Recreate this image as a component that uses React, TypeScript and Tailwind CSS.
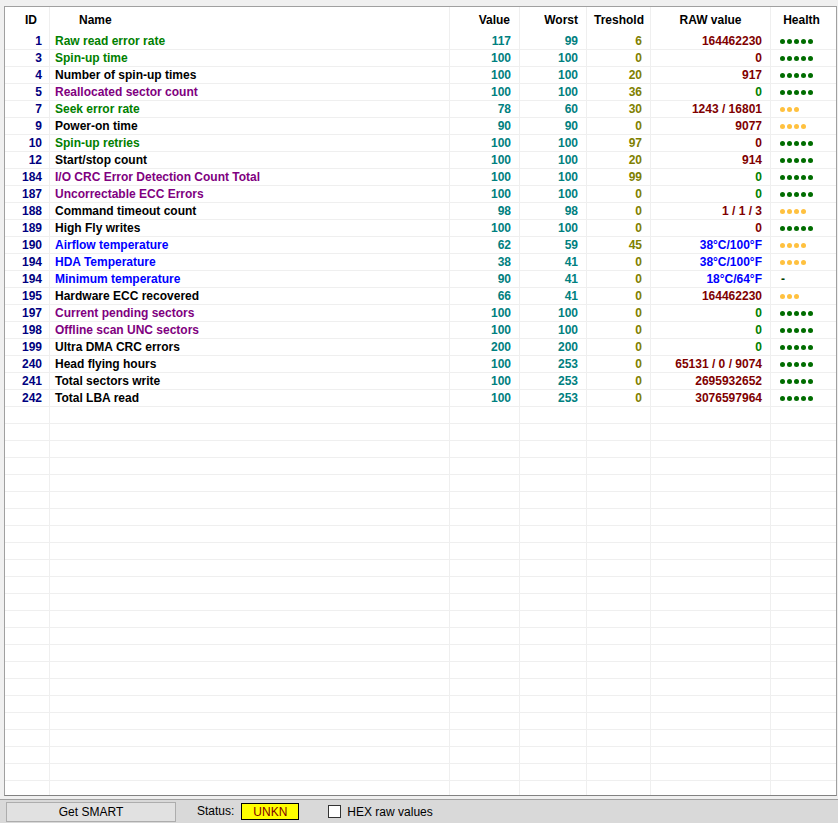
import React from 'react';

type Row = {
  id: number;
  name: string;
  nc: string;
  value: number;
  worst: number;
  thr: number;
  raw: string;
  rc: string;
  dots: number;
  dc: string;
};

const G = 'text-[#008000]';
const K = 'text-black';
const P = 'text-[#800080]';
const B = 'text-[#0000ff]';
const M = 'text-[#800000]';

const DG = 'bg-[#006d00]';
const DY = 'bg-[#ffc13f]';

const rows: Row[] = [
  { id: 1, name: 'Raw read error rate', nc: G, value: 117, worst: 99, thr: 6, raw: '164462230', rc: M, dots: 5, dc: DG },
  { id: 3, name: 'Spin-up time', nc: G, value: 100, worst: 100, thr: 0, raw: '0', rc: M, dots: 5, dc: DG },
  { id: 4, name: 'Number of spin-up times', nc: K, value: 100, worst: 100, thr: 20, raw: '917', rc: M, dots: 5, dc: DG },
  { id: 5, name: 'Reallocated sector count', nc: P, value: 100, worst: 100, thr: 36, raw: '0', rc: G, dots: 5, dc: DG },
  { id: 7, name: 'Seek error rate', nc: G, value: 78, worst: 60, thr: 30, raw: '1243 / 16801', rc: M, dots: 3, dc: DY },
  { id: 9, name: 'Power-on time', nc: K, value: 90, worst: 90, thr: 0, raw: '9077', rc: M, dots: 4, dc: DY },
  { id: 10, name: 'Spin-up retries', nc: G, value: 100, worst: 100, thr: 97, raw: '0', rc: M, dots: 5, dc: DG },
  { id: 12, name: 'Start/stop count', nc: K, value: 100, worst: 100, thr: 20, raw: '914', rc: M, dots: 5, dc: DG },
  { id: 184, name: 'I/O CRC Error Detection Count Total', nc: P, value: 100, worst: 100, thr: 99, raw: '0', rc: G, dots: 5, dc: DG },
  { id: 187, name: 'Uncorrectable ECC Errors', nc: P, value: 100, worst: 100, thr: 0, raw: '0', rc: G, dots: 5, dc: DG },
  { id: 188, name: 'Command timeout count', nc: K, value: 98, worst: 98, thr: 0, raw: '1 / 1 / 3', rc: M, dots: 4, dc: DY },
  { id: 189, name: 'High Fly writes', nc: K, value: 100, worst: 100, thr: 0, raw: '0', rc: M, dots: 5, dc: DG },
  { id: 190, name: 'Airflow temperature', nc: B, value: 62, worst: 59, thr: 45, raw: '38°C/100°F', rc: B, dots: 4, dc: DY },
  { id: 194, name: 'HDA Temperature', nc: B, value: 38, worst: 41, thr: 0, raw: '38°C/100°F', rc: B, dots: 4, dc: DY },
  { id: 194, name: 'Minimum temperature', nc: B, value: 90, worst: 41, thr: 0, raw: '18°C/64°F', rc: B, dots: 0, dc: DG },
  { id: 195, name: 'Hardware ECC recovered', nc: K, value: 66, worst: 41, thr: 0, raw: '164462230', rc: M, dots: 3, dc: DY },
  { id: 197, name: 'Current pending sectors', nc: P, value: 100, worst: 100, thr: 0, raw: '0', rc: G, dots: 5, dc: DG },
  { id: 198, name: 'Offline scan UNC sectors', nc: P, value: 100, worst: 100, thr: 0, raw: '0', rc: G, dots: 5, dc: DG },
  { id: 199, name: 'Ultra DMA CRC errors', nc: K, value: 200, worst: 200, thr: 0, raw: '0', rc: G, dots: 5, dc: DG },
  { id: 240, name: 'Head flying hours', nc: K, value: 100, worst: 253, thr: 0, raw: '65131 / 0 / 9074', rc: M, dots: 5, dc: DG },
  { id: 241, name: 'Total sectors write', nc: K, value: 100, worst: 253, thr: 0, raw: '2695932652', rc: M, dots: 5, dc: DG },
  { id: 242, name: 'Total LBA read', nc: K, value: 100, worst: 253, thr: 0, raw: '3076597964', rc: M, dots: 5, dc: DG },
];

const line = 'border-r border-[#efefef]';

function Health({ n, c }: { n: number; c: string }) {
  if (n === 0) return <span className="text-[#004000] pl-[1px]">-</span>;
  return (
    <div className="flex gap-[2px] items-center">
      {Array.from({ length: n }).map((_, i) => (
        <span key={i} className={`w-[5px] h-[5px] rounded-full ${c}`} />
      ))}
    </div>
  );
}

export default function App() {
  const empty = Array.from({ length: 24 });

  return (
    <div
      className="w-[838px] h-[823px] bg-[#f0f0f0] flex flex-col overflow-hidden"
      style={{ fontFamily: '"Liberation Sans", Arial, sans-serif' }}
    >
      {/* list */}
      <div className="mt-[6px] ml-[4px] mr-[1px] h-[790px] bg-white border-t border-l border-r border-[#a0a0a0] border-b-[#828282] border-b overflow-hidden text-[12px] font-bold leading-none">
        {/* header */}
        <div className="flex h-[26px] items-center text-black">
          <div className={`w-[45px] h-full flex items-center justify-end pr-[12px] ${line}`}>ID</div>
          <div className={`w-[400px] h-full flex items-center pl-[29px] ${line}`}>Name</div>
          <div className={`w-[70px] h-full flex items-center justify-end pr-[9px] ${line}`}>Value</div>
          <div className={`w-[67px] h-full flex items-center justify-end pr-[8px] ${line}`}>Worst</div>
          <div className={`w-[64px] h-full flex items-center justify-end pr-[6px] ${line}`}>Treshold</div>
          <div className={`w-[120px] h-full flex items-center justify-center ${line}`}>RAW value</div>
          <div className="flex-1 h-full flex items-center justify-center pr-[4px]">Health</div>
        </div>

        {rows.map((r, i) => (
          <div key={i} className="flex h-[17px] border-b border-[#efefef] items-stretch">
            <div className={`w-[45px] flex items-center justify-end pr-[7px] text-[#000080] ${line}`}>{r.id}</div>
            <div className={`w-[400px] flex items-center pl-[5px] ${r.nc} ${line}`}>{r.name}</div>
            <div className={`w-[70px] flex items-center justify-end pr-[8px] text-[#008080] ${line}`}>{r.value}</div>
            <div className={`w-[67px] flex items-center justify-end pr-[8px] text-[#008080] ${line}`}>{r.worst}</div>
            <div className={`w-[64px] flex items-center justify-end pr-[8px] text-[#808000] ${line}`}>{r.thr}</div>
            <div className={`w-[120px] flex items-center justify-end pr-[8px] ${r.rc} ${line}`}>{r.raw}</div>
            <div className="flex-1 flex items-center pl-[9px]">
              <Health n={r.dots} c={r.dc} />
            </div>
          </div>
        ))}

        {empty.map((_, i) => (
          <div key={'e' + i} className="flex h-[17px] border-b border-[#efefef]">
            <div className={`w-[45px] ${line}`} />
            <div className={`w-[400px] ${line}`} />
            <div className={`w-[70px] ${line}`} />
            <div className={`w-[67px] ${line}`} />
            <div className={`w-[64px] ${line}`} />
            <div className={`w-[120px] ${line}`} />
            <div className="flex-1" />
          </div>
        ))}
      </div>

      {/* bottom panel */}
      <div className="mt-[3px] flex-1 bg-[#d9d9d9] border-t border-[#a0a0a0] flex items-start pt-[2px] text-[12px] text-black">
        <button className="ml-[6px] w-[170px] h-[20px] bg-[#e1e1e1] border border-[#adadad] flex items-center justify-center leading-none">
          Get SMART
        </button>
        <span className="ml-[21px] mt-[3px] leading-none">Status:</span>
        <div className="ml-[7px] mt-[1px] w-[58px] h-[17px] bg-[#ffff00] border border-black flex items-center justify-center text-[#800000] leading-none">
          UNKN
        </div>
        <label className="ml-[29px] mt-[3px] flex items-center gap-[6px] leading-none">
          <span className="w-[13px] h-[13px] bg-white border border-[#333333]" />
          HEX raw values
        </label>
      </div>
    </div>
  );
}
